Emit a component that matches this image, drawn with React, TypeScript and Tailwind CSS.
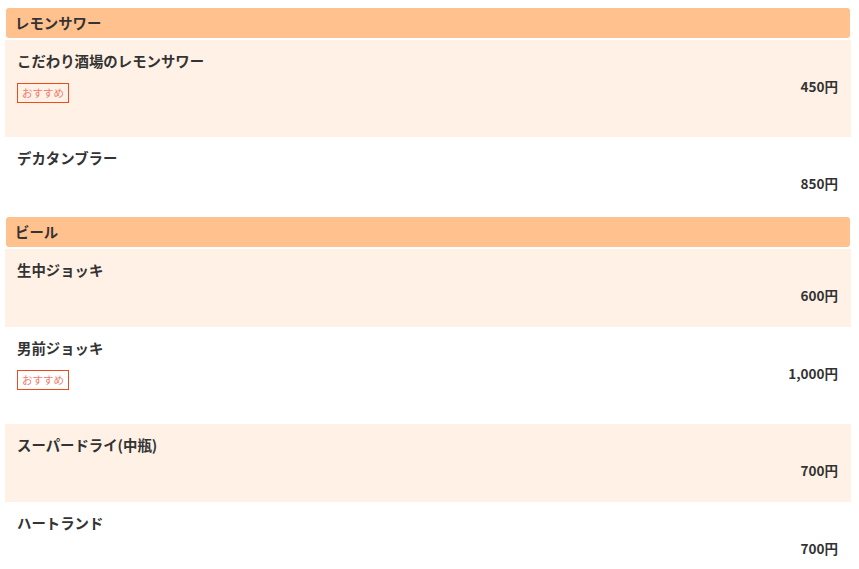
const menu = [
  {
    category: "レモンサワー",
    items: [
      { name: "こだわり酒場のレモンサワー", price: "450円", recommend: true },
      { name: "デカタンブラー", price: "850円", recommend: false },
    ],
  },
  {
    category: "ビール",
    items: [
      { name: "生中ジョッキ", price: "600円", recommend: false },
      { name: "男前ジョッキ", price: "1,000円", recommend: true },
      { name: "スーパードライ(中瓶)", price: "700円", recommend: false },
      { name: "ハートランド", price: "700円", recommend: false },
    ],
  },
];

export default function App() {
  return (
    <div className="min-h-screen bg-white pt-2 pl-[5px] pr-[8px] text-[#333] font-['Noto_Sans_CJK_JP','Noto_Sans',sans-serif]">
      {menu.map((section) => (
        <div key={section.category} className="mb-[2px]">
          {/* CATEGORY HEADER */}
          <div className="mx-px mb-[2px] h-[30px] rounded-[3px] bg-[#ffc28f] pl-[9px] pr-[10px] flex items-center">
            <h2 className="-mt-px text-[14.4px] font-bold leading-5">{section.category}</h2>
          </div>
          {/* ITEMS */}
          {section.items.map((item, i) => (
            <div
              key={item.name}
              className={`pl-3 pr-[13px] pt-[11px] pb-[22px] ${i % 2 === 0 ? "bg-[#fff1e6]" : "bg-white"}`}
            >
              <p className="h-5 text-[14.4px] font-bold leading-5">{item.name}</p>
              <div className="mt-[5px] flex items-start justify-between">
                <div>
                  {item.recommend && (
                    <span className="mt-[7px] mb-[12px] inline-block h-5 border border-[#f04a1a] px-[4px] text-[10.5px] leading-[18px] text-[#f07a6e]">
                      おすすめ
                    </span>
                  )}
                </div>
                <p className="h-5 text-[13.5px] font-bold leading-5">{item.price}</p>
              </div>
            </div>
          ))}
        </div>
      ))}
    </div>
  );
}
